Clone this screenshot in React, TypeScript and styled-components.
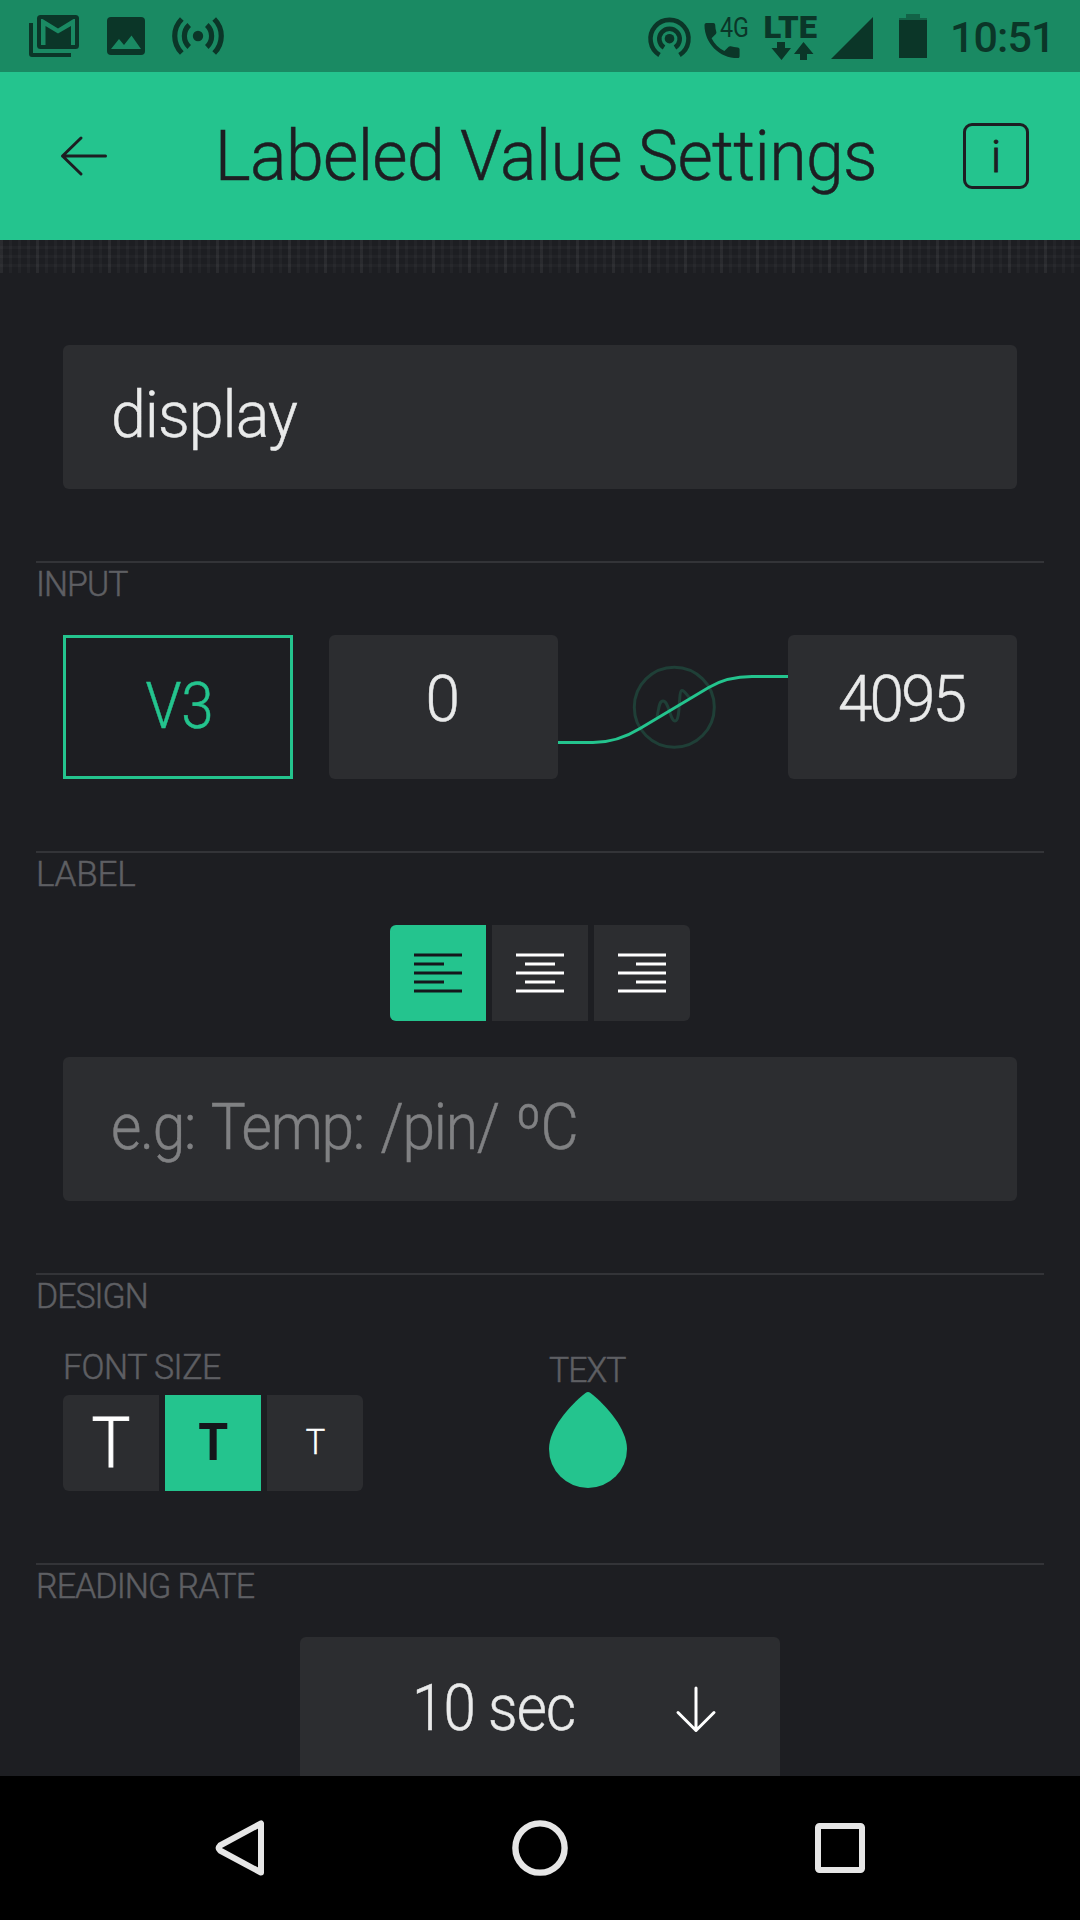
import React from "react";
import styled, { createGlobalStyle } from "styled-components";

const green = "#24c48e";
const ink = "#1d1e22";
const panel = "#2c2d30";
const light = "#e9eaea";
const statusInk = "#0b3628";

const GlobalStyle = createGlobalStyle`
  * { box-sizing: border-box; }
  html, body { margin: 0; padding: 0; background: #000; }
  body { font-family: Roboto, "Liberation Sans", sans-serif; font-weight: 300; }
  button { font: inherit; border: 0; margin: 0; padding: 0; }
  svg { display: block; flex: none; overflow: visible; }
`;

const Screen = styled.div`
  display: flex;
  flex-direction: column;
  width: 1080px;
  height: 1920px;
  overflow: hidden;
  background: ${ink};
`;

/* Narrows Roboto towards the proportions of a DIN face and adds a little weight. */
const Txt = styled.span<{ $scale?: number; $origin?: string; $stroke?: number }>`
  display: inline-block;
  transform: scaleX(${(p) => p.$scale ?? 1});
  transform-origin: ${(p) => p.$origin ?? "left"} center;
  -webkit-text-stroke: ${(p) => p.$stroke ?? 0.5}px currentColor;
`;

const StatusBar = styled.div`
  display: flex;
  flex: none;
  justify-content: space-between;
  height: 72px;
  padding: 0 30px 0 28px;
  background: #1a8a63;
  color: ${statusInk};
`;

const StatusGroup = styled.div<{ $gap: number }>`
  display: flex;
  gap: ${(p) => p.$gap}px;
`;

const Clock = styled.span`
  width: 100px;
  font-size: 43px;
  font-weight: 500;
  line-height: 74px;
  letter-spacing: -0.9px;
  white-space: nowrap;
`;

const Header = styled.header`
  display: flex;
  flex: none;
  align-items: center;
  height: 168px;
  padding: 0 51px 0 60px;
  background: ${green};
  color: ${ink};
`;

const Title = styled.h1`
  flex: 1;
  margin: 0;
  padding: 0 0 0 20px;
  font-size: 70px;
  font-weight: 300;
  line-height: 82px;
  letter-spacing: -0.7px;
  text-align: center;
  white-space: nowrap;
`;

const InfoButton = styled.button`
  width: 66px;
  height: 66px;
  border: 3px solid ${ink};
  border-radius: 9px;
  background: none;
  color: ${ink};
  font-size: 45px;
  line-height: 62px;
`;

const GridStrip = styled.div`
  flex: none;
  height: 33px;
  background-image:
    repeating-linear-gradient(90deg, rgba(255, 255, 255, 0.03) 0 3px, transparent 3px 36px),
    repeating-linear-gradient(90deg, rgba(255, 255, 255, 0.028) 0 3px, transparent 3px 9px),
    repeating-linear-gradient(180deg, transparent 0 6px, rgba(255, 255, 255, 0.025) 6px 9px);
`;

const Content = styled.main`
  display: flex;
  flex: 1;
  flex-direction: column;
  min-height: 0;
  padding: 72px 36px 0;
  overflow: hidden;
`;

const Field = styled.div<{ $muted?: boolean }>`
  flex: none;
  height: 144px;
  margin: 0 27px;
  padding: 0 48px;
  border-radius: 6px;
  background: ${panel};
  color: ${(p) => (p.$muted ? "#808183" : light)};
  font-size: 64px;
  line-height: 142px;
  letter-spacing: ${(p) => (p.$muted ? -1.4 : -1)}px;
  word-spacing: ${(p) => (p.$muted ? 4 : 0)}px;
  white-space: nowrap;
`;

const Section = styled.section`
  flex: none;
  margin-top: 72px;
  border-top: 2px solid #333438;
`;

const SectionLabel = styled.h2<{ $spacing?: number }>`
  height: 72px;
  margin: 0;
  color: #5e5f63;
  font-size: 35px;
  font-weight: 300;
  line-height: 44px;
  letter-spacing: ${(p) => p.$spacing ?? -1}px;
  white-space: nowrap;
`;

const InputRow = styled.div`
  display: grid;
  grid-template-columns: 229.5px 36px 229.5px 229.5px 229.5px;
  margin: 0 27px;
`;

const ValueBox = styled.div<{ $outlined?: boolean; $spacing?: number }>`
  display: flex;
  align-items: center;
  justify-content: center;
  height: 144px;
  padding: ${(p) => (p.$outlined ? "0 0 2px 3px" : "0 2px 16px 0")};
  border: ${(p) => (p.$outlined ? `3px solid ${green}` : "0")};
  border-radius: ${(p) => (p.$outlined ? 0 : 6)}px;
  background: ${(p) => (p.$outlined ? "none" : panel)};
  color: ${(p) => (p.$outlined ? green : light)};
  font-size: 64px;
  letter-spacing: ${(p) => p.$spacing ?? 0}px;
`;

const Segments = styled.div<{ $centered?: boolean }>`
  display: flex;
  gap: 6px;
  justify-content: ${(p) => (p.$centered ? "center" : "flex-start")};
  margin-bottom: ${(p) => (p.$centered ? 36 : 0)}px;
`;

const Segment = styled.button<{ $active?: boolean; $size?: number; $bold?: boolean }>`
  display: flex;
  align-items: center;
  justify-content: center;
  width: 96px;
  height: 96px;
  background: ${(p) => (p.$active ? green : panel)};
  color: ${(p) => (p.$active ? "#15161b" : "#ffffff")};
  font-size: ${(p) => p.$size ?? 16}px;
  font-weight: ${(p) => (p.$bold ? 700 : 300)};
  line-height: 96px;
  &:first-child { border-radius: 6px 0 0 6px; }
  &:last-child { border-radius: 0 6px 6px 0; }
`;

const DesignLabel = styled(SectionLabel)`
  height: 42px;
`;

const DesignRow = styled.div`
  display: flex;
  justify-content: space-between;
  width: 564px;
  height: 174px;
  margin-left: 27px;
  padding-top: 29px;
`;

const DesignColumn = styled.div<{ $offset?: number; $gap: number }>`
  display: flex;
  flex-direction: column;
  width: ${(p) => (p.$offset ? 78 : 300)}px;
  gap: ${(p) => p.$gap}px;
  padding-top: ${(p) => p.$offset ?? 0}px;
`;

const Select = styled.button`
  display: flex;
  align-items: center;
  justify-content: space-between;
  width: 480px;
  height: 144px;
  margin: 0 auto;
  padding: 0 64px 2px 112px;
  border-radius: 6px;
  background: ${panel};
  color: ${light};
  font-size: 64px;
  letter-spacing: -1px;
`;

const NavBar = styled.nav`
  display: flex;
  flex: none;
  align-items: center;
  justify-content: space-between;
  height: 144px;
  padding: 0 210px;
  background: #000;
`;

type AlignKind = "left" | "center" | "right";

const AlignIcon = ({ kind }: { kind: AlignKind }) => {
  const x = kind === "left" ? 0 : kind === "center" ? 9 : 18;
  return (
    <svg width="48" height="40" viewBox="0 0 48 40" stroke="currentColor" strokeWidth="3">
      <path d={`M0 2H48M${x} 11h30M0 20H48M${x} 29h30M0 38H48`} />
    </svg>
  );
};

const MailIcon = () => (
  <svg width="52" height="72" viewBox="28 0 52 72">
    <path d="M29 23h4v30h38v4H32q-3 0-3-3z" fill={statusInk} />
    <rect x="37" y="15" width="42" height="34" rx="3.5" fill={statusInk} />
    <path d="M41 19h1.500L58 28.500 73.500 19H75v26h-4V26L58 33.500 45.500 26v19H41z" fill="#1a8a63" />
  </svg>
);

const PictureIcon = () => (
  <svg width="38" height="72" viewBox="107 0 38 72">
    <rect x="107" y="17" width="38" height="38" rx="4" fill={statusInk} />
    <path d="M111 49l8-10 5 6 7.500-9.500L141 49z" fill="#1a8a63" />
  </svg>
);

const BroadcastIcon = () => (
  <svg width="52" height="72" viewBox="172 0 52 72" fill="none" stroke={statusInk} strokeWidth="5.200">
    <circle cx="198" cy="36" r="5.200" fill={statusInk} stroke="none" />
    <path d="M181.800 19a24 24 0 0 0 0 34M214.200 19a24 24 0 0 1 0 34M189.200 25a15 15 0 0 0 0 22M206.800 25a15 15 0 0 1 0 22" />
  </svg>
);

const HotspotIcon = () => (
  <svg width="44" height="72" viewBox="648 0 44 72" fill="none" stroke={statusInk} strokeWidth="4.600">
    <circle cx="669.500" cy="38.700" r="4.800" fill={statusInk} stroke="none" />
    <path d="M659.500 55a19 19 0 1 1 20 0M664 47.500a10.200 10.200 0 1 1 11 0" />
  </svg>
);

const CallIcon = () => (
  <svg width="46" height="72" viewBox="704.500 0 46 72" fill={statusInk}>
    <path
      transform="translate(698.150 17.150) scale(1.950)"
      d="M6.620 10.790c1.440 2.830 3.760 5.140 6.590 6.590l2.200-2.200c.27-.27.67-.36 1.020-.24 1.120.37 2.330.57 3.570.57.55 0 1 .45 1 1V20c0 .55-.45 1-1 1-9.390 0-17-7.610-17-17 0-.55.45-1 1-1h3.500c.55 0 1 .45 1 1 0 1.250.2 2.450.57 3.570.11.35.03.74-.25 1.020l-2.200 2.200z"
    />
    <text x="719.500" y="36.500" fontSize="28" fontWeight="400" textLength="29" lengthAdjust="spacingAndGlyphs">4G</text>
  </svg>
);

const LteIcon = () => (
  <svg width="54" height="72" viewBox="764 0 54 72" fill={statusInk}>
    <text x="763.500" y="38" fontSize="32" fontWeight="900" textLength="53.500" lengthAdjust="spacingAndGlyphs">LTE</text>
    <path d="M777 42h8v6h6l-9.500 12-10-12h5.500zM800 60h7v-6h6.500l-10-12-9.500 12h6z" />
  </svg>
);

const SignalIcon = () => (
  <svg width="42" height="72" viewBox="832 0 42 72">
    <path d="M832 59L874 17V59z" fill={statusInk} />
  </svg>
);

const BatteryIcon = () => (
  <svg width="28" height="72" viewBox="899 0 28 72">
    <path d="M906 14h14v4h7v3h-28v-3h7z" fill="#126347" />
    <path d="M899 20h28v38h-28z" fill={statusInk} />
  </svg>
);

const BackArrow = () => (
  <svg width="48" height="42" viewBox="60 135 48 42" fill="none" stroke={ink} strokeWidth="3" strokeLinecap="round" strokeLinejoin="round">
    <path d="M81 138L62.500 156 81 174M62.500 156H105.500" />
  </svg>
);

const SlopeGraph = () => (
  <svg width="229.500" height="144" viewBox="558 635 229.500 144" fill="none" strokeWidth="3">
    <circle cx="674.300" cy="707.200" r="40" stroke="#1f3f37" />
    <path d="M657 717C659 708 659 701 663 701C669 701 670 721 675 721C681 721 678 690.500 682 690.500C685 690.500 686 695 690 698" stroke="#1f3f37" />
    <path d="M558 742.500H593C613 742.500 627 736.500 640 728.500L708.700 687.500C722 679.500 735 676.500 752 676.500H788" stroke={green} />
  </svg>
);

const Drop = () => (
  <svg width="78" height="96" viewBox="0 0 78 96">
    <path d="M36.500 1Q39-.8 41.500 1C58 14 78 37 78 57A39 39 0 0 1 0 57C0 37 20 14 36.500 1z" fill={green} />
  </svg>
);

const DownArrow = () => (
  <svg width="40" height="48" viewBox="0 0 40 48" fill="none" stroke="#fff" strokeWidth="3" strokeLinecap="round" strokeLinejoin="round">
    <path d="M20 4V46.500M2 28.500L20 46.500 38 28.500" />
  </svg>
);

const NavBack = () => (
  <svg width="60" height="60" viewBox="210 1818 60 60" fill="none" stroke="#e6e6e6" strokeWidth="6" strokeLinejoin="round">
    <path d="M261 1823.500V1872.500L220 1850.500Q217.500 1848 220 1845.500z" />
  </svg>
);

const NavHome = () => (
  <svg width="60" height="60" viewBox="0 0 60 60" fill="none" stroke="#e6e6e6" strokeWidth="6.400">
    <circle cx="30" cy="30" r="24.600" />
  </svg>
);

const NavRecent = () => (
  <svg width="60" height="60" viewBox="0 0 60 60" fill="none" stroke="#e6e6e6" strokeWidth="6">
    <rect x="8" y="8" width="44" height="44" rx="1.500" />
  </svg>
);

export default function App() {
  return (
    <Screen>
      <GlobalStyle />
      <StatusBar>
        <StatusGroup $gap={27}>
          <MailIcon />
          <PictureIcon />
          <BroadcastIcon />
        </StatusGroup>
        <StatusGroup $gap={26}>
          <StatusGroup $gap={13}>
            <HotspotIcon />
            <CallIcon />
            <LteIcon />
            <SignalIcon />
          </StatusGroup>
          <StatusGroup $gap={23}>
            <BatteryIcon />
            <Clock>10:51</Clock>
          </StatusGroup>
        </StatusGroup>
      </StatusBar>
      <Header>
        <BackArrow />
        <Title><Txt $scale={0.974} $origin="center">Labeled Value Settings</Txt></Title>
        <InfoButton><Txt $stroke={1}>i</Txt></InfoButton>
      </Header>
      <GridStrip />
      <Content>
        <Field><Txt $scale={0.98}>display</Txt></Field>
        <Section>
          <SectionLabel><Txt $scale={0.965}>INPUT</Txt></SectionLabel>
          <InputRow>
            <ValueBox $outlined><Txt $scale={0.910} $origin="center">V3</Txt></ValueBox>
            <span />
            <ValueBox><Txt $scale={0.970} $origin="center">0</Txt></ValueBox>
            <SlopeGraph />
            <ValueBox $spacing={-3}><Txt $scale={0.970} $origin="center">4095</Txt></ValueBox>
          </InputRow>
        </Section>
        <Section>
          <SectionLabel $spacing={-0.200}><Txt>LABEL</Txt></SectionLabel>
          <Segments $centered>
            <Segment $active><AlignIcon kind="left" /></Segment>
            <Segment><AlignIcon kind="center" /></Segment>
            <Segment><AlignIcon kind="right" /></Segment>
          </Segments>
          <Field $muted><Txt $scale={0.917}>e.g: Temp: /pin/ ºC</Txt></Field>
        </Section>
        <Section>
          <DesignLabel><Txt $scale={0.965}>DESIGN</Txt></DesignLabel>
          <DesignRow>
            <DesignColumn $gap={7}>
              <DesignLabel $spacing={-0.500}><Txt $scale={0.968}>FONT SIZE</Txt></DesignLabel>
              <Segments>
                <Segment $size={70}><Txt $scale={0.930} $origin="center" $stroke={0.900}>T</Txt></Segment>
                <Segment $active $bold $size={52}><Txt $scale={0.930} $origin="center" $stroke={0}>T</Txt></Segment>
                <Segment $size={35}><Txt $scale={0.930} $origin="center">T</Txt></Segment>
              </Segments>
            </DesignColumn>
            <DesignColumn $gap={1} $offset={3}>
              <DesignLabel><Txt $scale={0.965}>TEXT</Txt></DesignLabel>
              <Drop />
            </DesignColumn>
          </DesignRow>
        </Section>
        <Section>
          <SectionLabel><Txt $scale={0.972}>READING RATE</Txt></SectionLabel>
          <Select>
            <Txt $scale={0.910}>10 sec</Txt>
            <DownArrow />
          </Select>
        </Section>
      </Content>
      <NavBar>
        <NavBack />
        <NavHome />
        <NavRecent />
      </NavBar>
    </Screen>
  );
}
